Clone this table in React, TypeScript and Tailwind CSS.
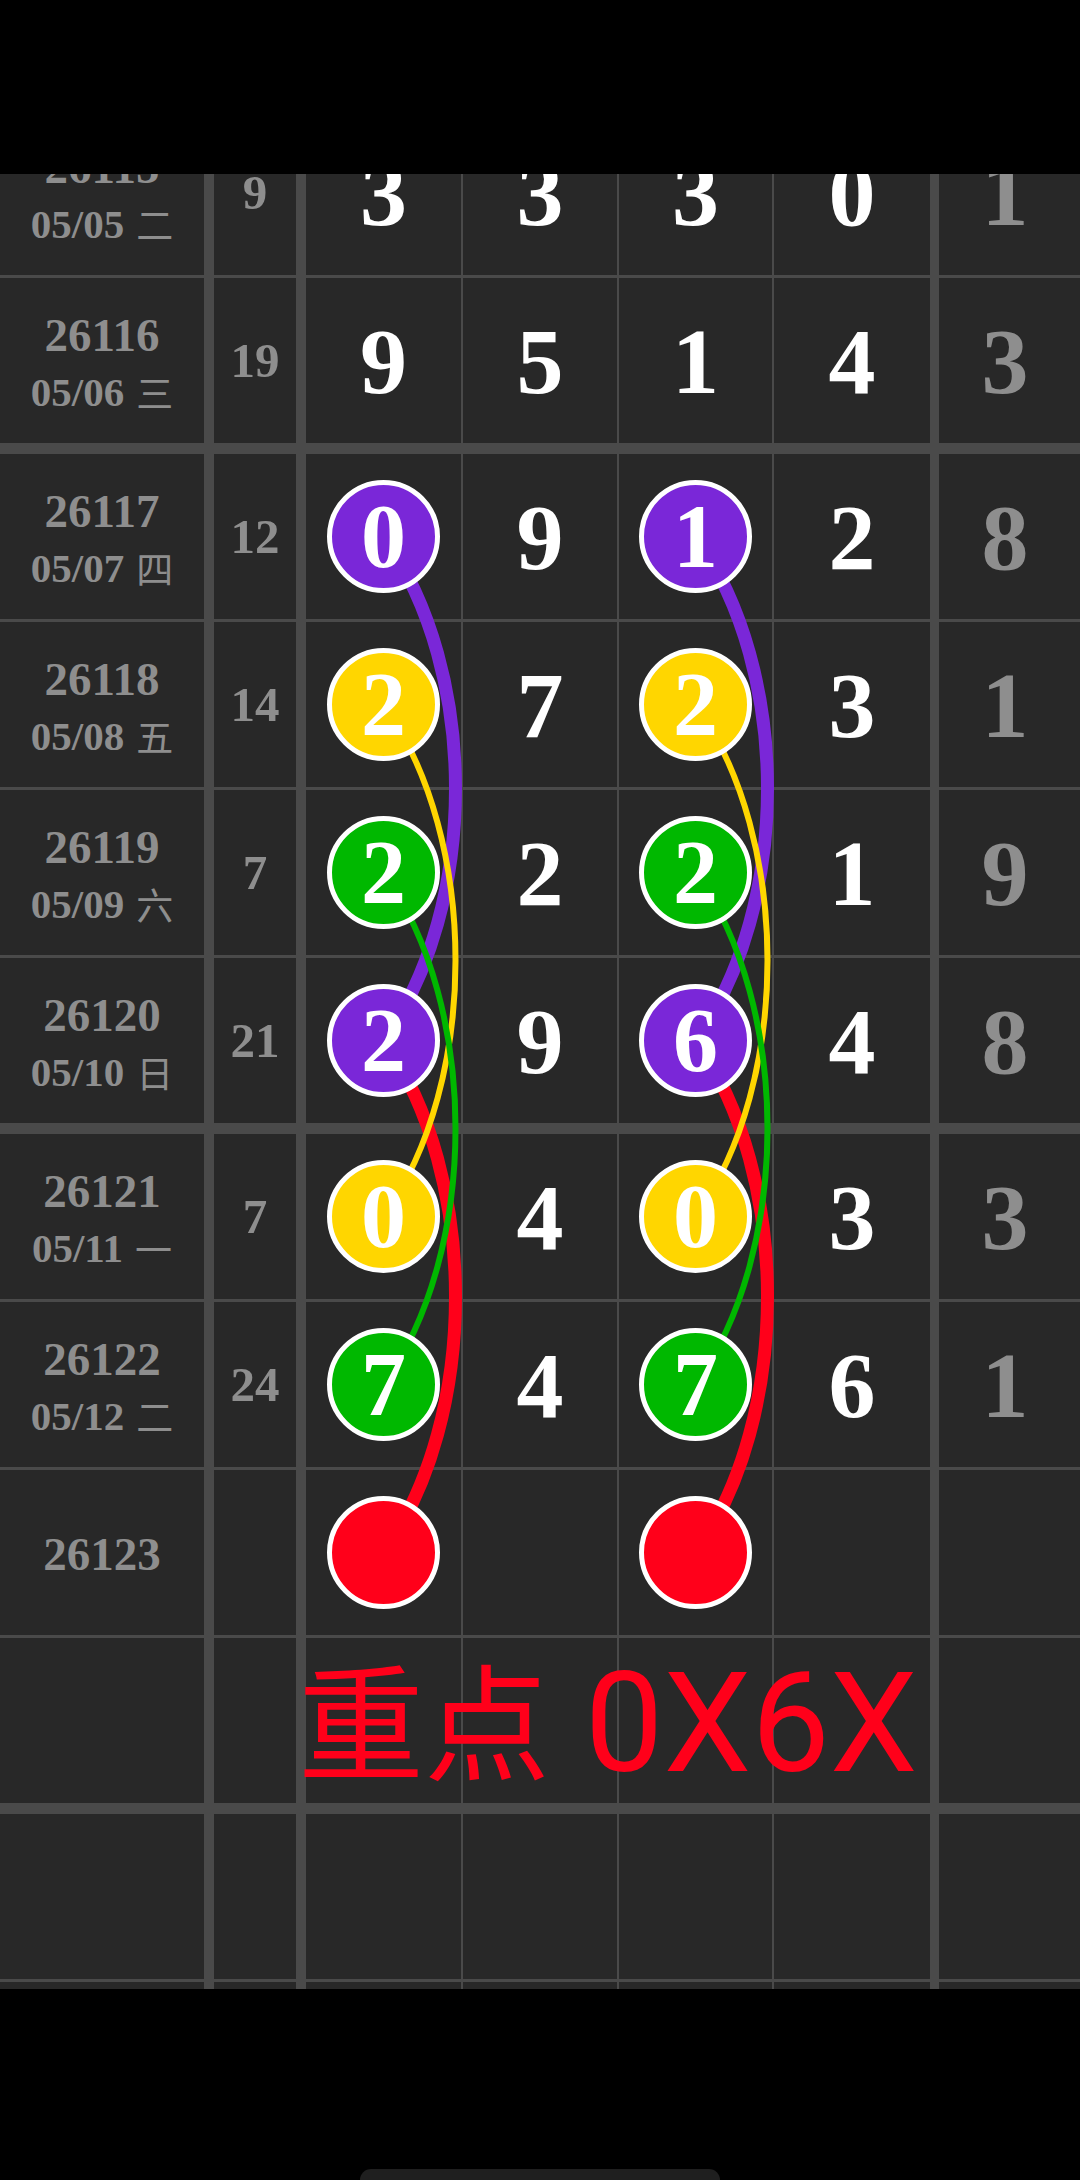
import React from 'react';

type Ball = { n: string; c: 'purple' | 'yellow' | 'green' | 'red' };
type Digit = string | Ball | null;

type Row = {
  id: string;
  date?: string;
  wd?: string;
  sum?: string;
  d: Digit[];
  tail?: string;
  thick?: boolean;
};

const BALL_BG = {
  purple: 'bg-[#7a27d8]',
  yellow: 'bg-[#ffd600]',
  green: 'bg-[#00b800]',
  red: 'bg-[#ff001a]',
};

const LINE = {
  purple: '#7a27d8',
  yellow: '#ffd600',
  green: '#00b800',
  red: '#ff001a',
};

const ROWS: Row[] = [
  { id: '26115', date: '05/05', wd: '二', sum: '9', d: ['3', '3', '3', '0'], tail: '1' },
  { id: '26116', date: '05/06', wd: '三', sum: '19', d: ['9', '5', '1', '4'], tail: '3', thick: true },
  { id: '26117', date: '05/07', wd: '四', sum: '12', d: [{ n: '0', c: 'purple' }, '9', { n: '1', c: 'purple' }, '2'], tail: '8' },
  { id: '26118', date: '05/08', wd: '五', sum: '14', d: [{ n: '2', c: 'yellow' }, '7', { n: '2', c: 'yellow' }, '3'], tail: '1' },
  { id: '26119', date: '05/09', wd: '六', sum: '7', d: [{ n: '2', c: 'green' }, '2', { n: '2', c: 'green' }, '1'], tail: '9' },
  { id: '26120', date: '05/10', wd: '日', sum: '21', d: [{ n: '2', c: 'purple' }, '9', { n: '6', c: 'purple' }, '4'], tail: '8', thick: true },
  { id: '26121', date: '05/11', wd: '一', sum: '7', d: [{ n: '0', c: 'yellow' }, '4', { n: '0', c: 'yellow' }, '3'], tail: '3' },
  { id: '26122', date: '05/12', wd: '二', sum: '24', d: [{ n: '7', c: 'green' }, '4', { n: '7', c: 'green' }, '6'], tail: '1' },
  { id: '26123', d: [{ n: '', c: 'red' }, null, { n: '', c: 'red' }, null] },
  { id: '', d: [null, null, null, null], thick: true },
  { id: '', d: [null, null, null, null] },
  { id: '', d: [null, null, null, null] },
];

// cell widths include the right-hand grid line
const DIGIT_COLS = ['w-[157px] border-r-2', 'w-[156px] border-r-2', 'w-[155px] border-r-2', 'w-[165px] border-r-[9px]'];

const serif = "font-['Liberation_Serif','Noto_Sans_CJK_SC',serif] font-bold leading-none";

// ball centres (page coordinates)
const COL_X = [383.5, 695.5];
const LINKS: { c: keyof typeof LINE; y0: number; y1: number; w: number }[] = [
  { c: 'purple', y0: 536.5, y1: 1040.5, w: 13 },
  { c: 'red', y0: 1040.5, y1: 1552.5, w: 13 },
  { c: 'yellow', y0: 704.5, y1: 1216.5, w: 6 },
  { c: 'green', y0: 872.5, y1: 1384.5, w: 6 },
];

const curve = (x: number, y0: number, y1: number) =>
  `M${x} ${y0} C${x + 96} ${y0 + 135} ${x + 96} ${y1 - 135} ${x} ${y1}`;

const DigitCell: React.FC<{ v: Digit; cls: string }> = ({ v, cls }) => (
  <div className={`${cls} border-[#4a4a4a] flex items-center justify-center`}>
    {typeof v === 'string' && <span className={`${serif} text-[94px] text-white`}>{v}</span>}
    {v && typeof v === 'object' && (
      <div
        className={`relative z-10 flex h-[113px] w-[113px] items-center justify-center rounded-full border-[5px] border-white ${BALL_BG[v.c]}`}
      >
        <span className={`${serif} text-[90px] text-white`}>{v.n}</span>
      </div>
    )}
  </div>
);

const App: React.FC = () => {
  return (
    <div className="relative h-[2180px] w-[1080px] overflow-hidden bg-black">
      <div className="h-[174px]" />

      <div className="h-[1815px] overflow-hidden bg-[#282828]">
        {ROWS.map((r, i) => (
          <div
            key={i}
            className={`relative flex border-[#4a4a4a] ${i === 0 ? '-mt-16' : ''} ${
              r.thick ? 'h-[176px] border-b-[11px]' : 'h-[168px] border-b-[3px]'
            }`}
          >
            <div className="flex w-[214px] flex-col items-center justify-center border-r-[10px] border-[#4a4a4a] pt-1 text-[#8e8e8e]">
              {r.id && <span className={`${serif} text-[47px]`}>{r.id}</span>}
              {r.date && (
                <span className={`${serif} mt-[13px] flex items-center text-[41px]`}>
                  {r.date}
                  <span className="ml-[12px] font-['Noto_Sans_CJK_SC',sans-serif] text-[37px] font-normal">{r.wd}</span>
                </span>
              )}
            </div>
            <div className="flex w-[92px] items-center justify-center border-r-[10px] border-[#4a4a4a]">
              <span className={`${serif} text-[49px] text-[#8e8e8e]`}>{r.sum}</span>
            </div>
            {r.d.map((v, j) => (
              <DigitCell key={j} v={v} cls={DIGIT_COLS[j]} />
            ))}
            <div className="flex flex-1 items-center justify-center pr-[9px]">
              <span className={`${serif} text-[94px] text-[#8e8e8e]`}>{r.tail}</span>
            </div>

            {i === 9 && (
              <div className="absolute left-[298px] top-[15px] flex items-baseline whitespace-pre leading-none text-[#ff001a]">
                <span className="font-['Noto_Sans_CJK_SC',sans-serif] text-[126px]">重点</span>
                <span className="font-['Roboto','Noto_Sans_CJK_SC',sans-serif] text-[140px]"> 0X6X</span>
              </div>
            )}
          </div>
        ))}
      </div>

      <div className="flex h-[191px] items-end justify-center">
        <div className="mb-[-11px] h-[22px] w-[360px] rounded-full bg-[#1f1f1f]" />
      </div>

      <svg className="pointer-events-none absolute left-0 top-0" width="1080" height="2180" fill="none">
        {COL_X.map((x) =>
          LINKS.map((l) => (
            <path key={`${x}-${l.c}`} d={curve(x, l.y0, l.y1)} stroke={LINE[l.c]} strokeWidth={l.w} strokeLinecap="round" />
          ))
        )}
      </svg>
    </div>
  );
};

export default App;
